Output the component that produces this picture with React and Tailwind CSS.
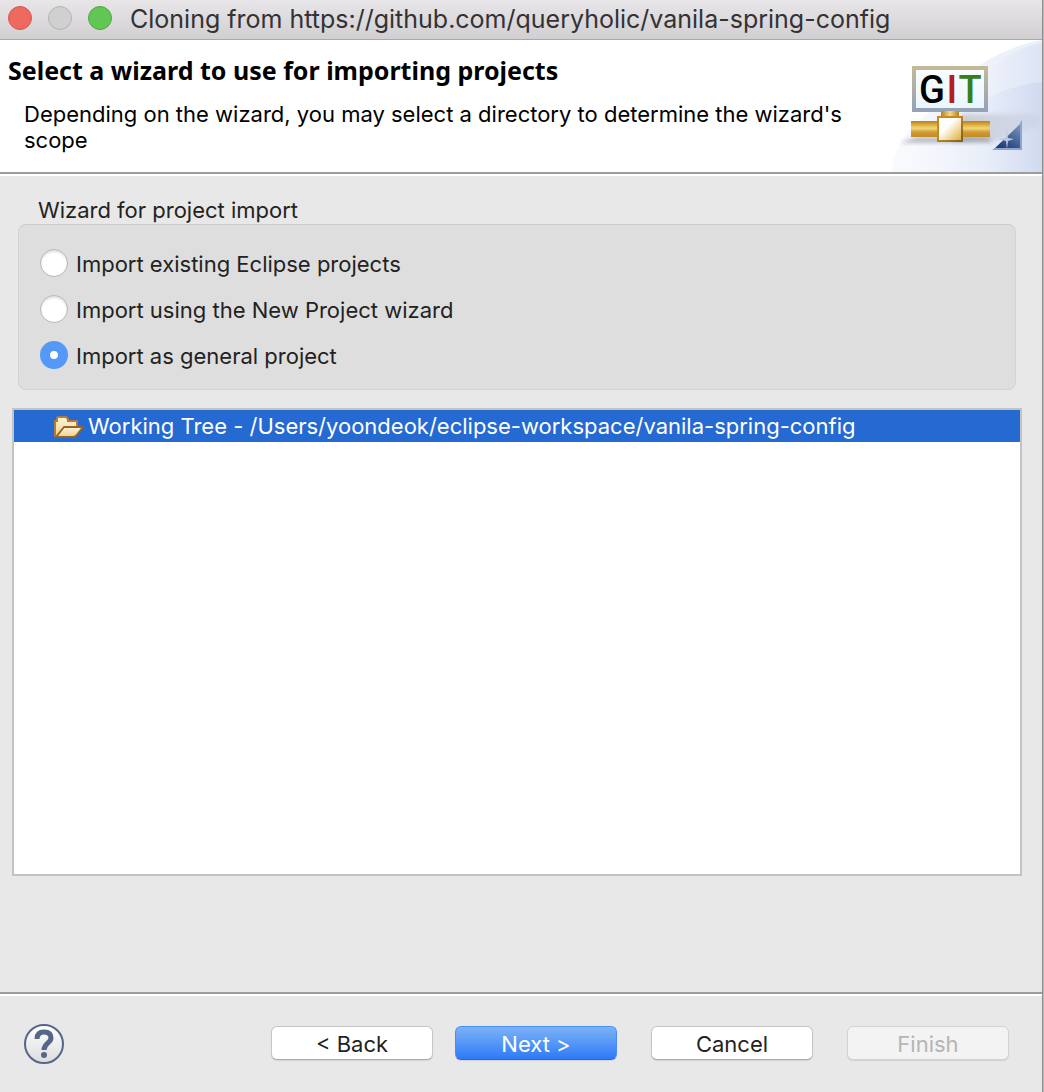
import { useState } from "react";

const OPTIONS = [
  "Import existing Eclipse projects",
  "Import using the New Project wizard",
  "Import as general project",
];

function TitleBar() {
  return (
    <header className="flex h-10 shrink-0 items-center border-b border-[#a9a8aa] bg-linear-to-b from-[#e8e6e8] to-[#d1cfd1] pl-2 pb-[3px]">
      <div className="flex gap-4">
        <button type="button" aria-label="Close" className="size-6 rounded-full border border-[#d9574d] bg-[#ee6a5f]" />
        <button type="button" aria-label="Minimize" className="size-6 rounded-full border border-[#b4b4b4] bg-[#d0d0d0]" />
        <button type="button" aria-label="Zoom" className="size-6 rounded-full border border-[#4fa73f] bg-[#61c654]" />
      </div>
      <h1 className="ml-[18px] whitespace-nowrap pt-[2px] font-['Inter',sans-serif] text-[25px] leading-8 text-[#333234]">
        Cloning from https://github.com/queryholic/vanila-spring-config
      </h1>
    </header>
  );
}

function GitBanner() {
  return (
    <svg width="150" height="132" viewBox="0 0 150 132" className="block shrink-0" role="img" aria-label="Git">
      <defs>
        <linearGradient id="sky" x1="0" x2="1">
          <stop offset="0" stopColor="#fafbfe" />
          <stop offset="0.5" stopColor="#f1f4fb" />
          <stop offset="1" stopColor="#e9eef9" />
        </linearGradient>
        <linearGradient id="sky2" gradientUnits="userSpaceOnUse" x1="97" x2="150" y1="0" y2="0">
          <stop offset="0" stopColor="#edf1fa" />
          <stop offset="1" stopColor="#dce4f5" />
        </linearGradient>
        <linearGradient id="sky3" gradientUnits="userSpaceOnUse" x1="20" x2="150" y1="0" y2="0">
          <stop offset="0" stopColor="#f8f9fd" />
          <stop offset="0.55" stopColor="#e9eef9" />
          <stop offset="1" stopColor="#d0daf0" />
        </linearGradient>
        <linearGradient id="frame" x1="0" x2="0" y1="0" y2="1">
          <stop offset="0" stopColor="#c3b997" />
          <stop offset="1" stopColor="#96a2b8" />
        </linearGradient>
        <linearGradient id="screen" x1="0" x2="0" y1="0" y2="1">
          <stop offset="0" stopColor="#f9fdfe" />
          <stop offset="1" stopColor="#eaf6fd" />
        </linearGradient>
        <linearGradient id="pipe" x1="0" x2="0" y1="0" y2="1">
          <stop offset="0" stopColor="#b87f22" />
          <stop offset="0.2" stopColor="#d9a734" />
          <stop offset="0.45" stopColor="#f2d67c" />
          <stop offset="0.7" stopColor="#cf9b32" />
          <stop offset="1" stopColor="#c18b2a" />
        </linearGradient>
        <linearGradient id="neck" x1="0" x2="1">
          <stop offset="0" stopColor="#b97f20" />
          <stop offset="0.5" stopColor="#f4d985" />
          <stop offset="1" stopColor="#b97f20" />
        </linearGradient>
        <linearGradient id="cube" x1="0" y1="0" x2="1" y2="1">
          <stop offset="0.4" stopColor="#fffefa" />
          <stop offset="1" stopColor="#dda72f" />
        </linearGradient>
        <linearGradient id="cubeEdge" x1="0" y1="0" x2="1" y2="1">
          <stop offset="0.4" stopColor="#c68a22" />
          <stop offset="1" stopColor="#7e6220" />
        </linearGradient>
        <linearGradient id="corner" x1="1" y1="0" x2="0.4" y2="1">
          <stop offset="0" stopColor="#7f9bc8" />
          <stop offset="1" stopColor="#223f78" />
        </linearGradient>
        <linearGradient id="shade" x1="0" x2="1">
          <stop offset="0" stopColor="#9c9ca2" />
          <stop offset="1" stopColor="#b4b8c8" stopOpacity="0.3" />
        </linearGradient>
        <filter id="soft" x="-20%" y="-50%" width="140%" height="200%">
          <feGaussianBlur stdDeviation="2" />
        </filter>
      </defs>
      <path d="M0 132C4 104 16 88 38 72C60 40 104 8 150 0V132Z" fill="url(#sky)" />
      <path d="M97 31C110 18 128 7 150 3V70H97Z" fill="url(#sky2)" />
      <path d="M0 132C4 104 16 88 38 72L97 57C114 49 130 44 150 42V132Z" fill="url(#sky3)" />
      <path d="M70 74H146L150 84L100 102H60Z" fill="url(#shade)" opacity="0.5" filter="url(#soft)" />
      <path d="M8 103L24 97H96L100 102Z" fill="#767b86" opacity="0.5" filter="url(#soft)" />
      <rect x="22" y="28" width="72" height="42" fill="url(#screen)" stroke="url(#frame)" strokeWidth="4" />
      <g fontFamily="Roboto, sans-serif" fontSize="38" fontWeight="500" textAnchor="middle">
        <text x="40" y="63" fill="#000">G</text>
        <text x="60" y="63" fill="#b3201c">I</text>
        <text x="78" y="63" fill="#34801c">T</text>
      </g>
      <rect x="49" y="71" width="18" height="6" fill="url(#neck)" />
      <rect x="19" y="81" width="79" height="16" fill="url(#pipe)" />
      <rect x="46" y="77" width="24" height="24" fill="url(#cube)" stroke="url(#cubeEdge)" strokeWidth="2" />
      <path d="M129 83V109H102Z" fill="url(#corner)" />
      <path d="M130 80V110H100L103 108H128V83Z" fill="#8ea5cd" />
      <path d="M115 90L116 98L122 99L116 101L115 109L114 101L106 99L114 98Z" fill="#b9c8e2" />
    </svg>
  );
}

function FolderIcon() {
  return (
    <svg width="30" height="24" viewBox="0 0 30 24" className="block shrink-0" aria-hidden="true">
      <defs>
        <linearGradient id="folder" x1="0" x2="0" y1="0" y2="1">
          <stop offset="0" stopColor="#fdf6da" />
          <stop offset="1" stopColor="#efcf86" />
        </linearGradient>
      </defs>
      <path d="M1 23V7H3V4L4 3H12L14 5V7H23V13" fill="url(#folder)" stroke="#b07b3c" strokeWidth="2" />
      <path d="M2 23L10 13H29L22 22L20 23Z" fill="url(#folder)" stroke="#966428" strokeWidth="2" strokeLinejoin="round" />
    </svg>
  );
}

function HelpIcon() {
  return (
    <svg width="40" height="40" viewBox="0 0 40 40" className="block" aria-hidden="true">
      <defs>
        <linearGradient id="help" x1="0" x2="0" y1="0" y2="1">
          <stop offset="0" stopColor="#ffffff" />
          <stop offset="1" stopColor="#dcdcdc" />
        </linearGradient>
      </defs>
      <circle cx="20" cy="20" r="19" fill="url(#help)" stroke="#56658a" strokeWidth="2" />
      <path d="M13 15C13 10 16 8 20 8C25 8 27 10 27 14C27 19 20 19 20 26" fill="none" stroke="#56658a" strokeWidth="5" />
      <circle cx="20" cy="31" r="3" fill="#56658a" />
    </svg>
  );
}

const BUTTON =
  "h-[34px] w-[162px] rounded-md border text-[22px] leading-7 flex items-center justify-center pt-[2px] shadow-[0_1px_1px_#00000018]";

export default function App() {
  const [choice, setChoice] = useState(2);
  return (
    <div className="flex min-h-screen bg-[#b9b9b9] pr-px font-['Inter',sans-serif] text-[22px] leading-[26px] text-[#222222]">
      <div className="flex min-w-0 flex-1 flex-col border-r border-[#8e8e8e] bg-[#e8e8e8]">
        <TitleBar />
        <div className="flex justify-between border-b-2 border-[#9d9d9d] bg-white text-black">
          <div className="min-w-0 pl-2 pt-[15px]">
            <h2 className="whitespace-nowrap font-['Noto_Sans',sans-serif] text-[25px] font-bold leading-[30px]">
              Select a wizard to use for importing projects
            </h2>
            <p className="mt-4 pl-4">
              Depending on the wizard, you may select a directory to determine the wizard's scope
            </p>
          </div>
          <GitBanner />
        </div>
        <main className="flex flex-1 flex-col border-t-2 border-white px-3 pt-[21px]">
          <fieldset className="ml-[6px] mr-[14px]">
            <legend className="pb-px pl-5">Wizard for project import</legend>
            <div className="flex flex-col gap-[18px] rounded-lg border border-[#d3d3d3] border-t-[#cccccc] bg-[#dedede] px-[21px] pt-6 pb-5">
              {OPTIONS.map((label, i) => (
                <label key={label} className="flex h-7 items-center gap-2">
                  <input
                    type="radio"
                    name="wizard"
                    checked={choice === i}
                    onChange={() => setChoice(i)}
                    className="size-7 shrink-0 appearance-none rounded-full border border-[#b5b5b5] bg-white shadow-[inset_0_2px_2px_#e2e2e2] checked:border-[10px] checked:border-[#5499f8] checked:shadow-none"
                  />
                  <span className="pt-[2px]">{label}</span>
                </label>
              ))}
            </div>
          </fieldset>
          <div role="listbox" aria-label="Working tree" className="mt-[18px] mr-2 mb-[116px] flex-1 border-2 border-[#c3c3c3] bg-white">
            <div role="option" aria-selected="true" className="flex h-8 items-center gap-1 bg-[#2569d3] pl-10 text-white">
              <FolderIcon />
              <span className="whitespace-nowrap">Working Tree - /Users/yoondeok/eclipse-workspace/vanila-spring-config</span>
            </div>
          </div>
        </main>
        <footer className="border-t-2 border-[#9d9d9d]">
          <div className="flex items-start justify-between border-t-2 border-white pt-7 pb-7 pl-6 pr-[33px]">
            <button type="button" aria-label="Help">
              <HelpIcon />
            </button>
            <div className="flex gap-[34px] pt-[2px]">
              <div className="flex gap-[22px]">
                <button type="button" className={`${BUTTON} border-[#c6c6c6] border-b-[#ababab] bg-white`}>&lt; Back</button>
                <button type="button" className={`${BUTTON} border-[#4a90f4] border-b-[#2466ee] bg-linear-to-b from-[#7cb1f6] to-[#2c7af8] text-white`}>Next &gt;</button>
              </div>
              <button type="button" className={`${BUTTON} border-[#c6c6c6] border-b-[#ababab] bg-white`}>Cancel</button>
              <button type="button" disabled className={`${BUTTON} border-[#d2d2d2] bg-[#f3f3f3] text-[#b5b5b5]`}>Finish</button>
            </div>
          </div>
        </footer>
      </div>
    </div>
  );
}
